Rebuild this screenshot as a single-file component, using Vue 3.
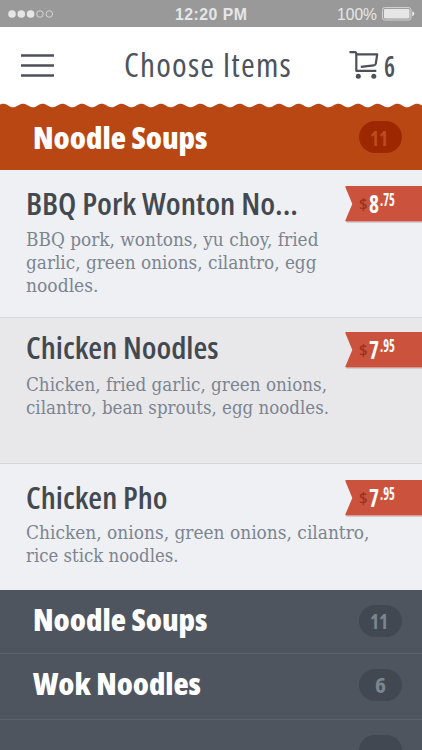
<script setup>
import { h } from 'vue'

// One line of text set to an exact measure, so wide faces can be condensed.
const FitText = (props) =>
  h('svg', { class: 'fit', width: props.w, height: props.h }, [
    h('text', { x: 0, y: props.b, textLength: props.w, lengthAdjust: 'spacingAndGlyphs' }, props.t),
  ])
FitText.props = ['t', 'w', 'h', 'b']

const dishes = [
  {
    name: 'BBQ Pork Wonton No...', w: 272, size: 'first', dollars: '8', cents: '.75',
    lines: [
      ['BBQ pork, wontons, yu choy, fried', 292.5],
      ['garlic, green onions, cilantro, egg', 290.5],
      ['noodles.', 72.5],
    ],
  },
  {
    name: 'Chicken Noodles', w: 192.5, size: 'second', dollars: '7', cents: '.95',
    lines: [
      ['Chicken, fried garlic, green onions,', 301],
      ['cilantro, bean sprouts, egg noodles.', 303],
    ],
  },
  {
    name: 'Chicken Pho', w: 141.5, size: 'third', dollars: '7', cents: '.95',
    lines: [
      ['Chicken, onions, green onions, cilantro,', 343.5],
      ['rice stick noodles.', 152.5],
    ],
  },
]

const period = 19.7
let wave = 'M0 0H422V5.3'
for (let x = 422; x >= 0; x -= 1) {
  const y = 5.5 - 1.8 * Math.cos(((x - 3.3) / period) * 2 * Math.PI)
  wave += `L${x} ${y.toFixed(2)}`
}
wave += 'Z'
</script>

<template>
  <main class="screen">
    <div class="status">
      <svg class="signal" width="46" height="10">
        <circle cx="4" cy="5" r="3.8" class="on" />
        <circle cx="13.3" cy="5" r="3.8" class="on" />
        <circle cx="22.6" cy="5" r="3.8" class="on" />
        <circle cx="32" cy="5" r="3.3" class="off" />
        <circle cx="41.3" cy="5" r="3.3" class="off" />
      </svg>
      <FitText class="clock" t="12:20 PM" :w="72.5" :h="20" :b="19.7" />
      <FitText class="percent" t="100%" :w="40" :h="20" :b="19.8" />
      <svg class="battery" width="33" height="14">
        <rect x=".6" y=".6" width="28.3" height="12.4" rx="2" class="case" />
        <rect x="2" y="2" width="25.5" height="9.6" rx="1" class="on" />
        <path d="M30.2 4.5Q32.4 5 32.4 6.8Q32.4 8.6 30.2 9.2Z" class="on" />
      </svg>
    </div>

    <header class="header">
      <svg class="menu" width="33" height="24">
        <path d="M0 1.5H33M0 11.5H33M0 21.5H33" />
      </svg>
      <FitText class="title" t="Choose Items" :w="168" :h="50" :b="38.3" />
      <svg class="cart" width="30" height="30" viewBox="0 0 30 30">
        <path d="M.5 2.2H5.6Q7.3 2.2 7.3 4V20.8H27.3M7.3 4.4H28.2L26.8 13.6Q26.5 15.2 24.8 15.4L11.8 16.8" />
        <circle cx="9.3" cy="26.2" r="2.5" />
        <circle cx="24.8" cy="26.2" r="2.5" />
      </svg>
      <FitText class="cart-count" t="6" :w="11" :h="50" :b="37.5" />
    </header>

    <section class="category active">
      <svg class="scallop" width="422" height="10"><path :d="wave" /></svg>
      <FitText class="cat-name" t="Noodle Soups" :w="174.5" :h="40" :b="30.5" />
      <span class="badge"><FitText t="11" :w="18" :h="31" :b="24.8" /></span>
    </section>

    <article v-for="d in dishes" :key="d.name" class="dish" :class="d.size">
      <FitText class="dish-name" :t="d.name" :w="d.w" :h="36" :b="30" />
      <div class="desc">
        <FitText v-for="l in d.lines" :key="l[0]" :t="l[0]" :w="l[1]" :h="23" :b="17" />
      </div>
      <div class="price">
        <svg class="ribbon" width="77" height="37">
          <path class="shade" d="M1.5 36.3H77" />
          <path class="body" d="M1.5 0H77V35.5H1.5Q-.2 35.5.5 34L7.3 18 .5 1.5Q-.2 0 1.5 0Z" />
        </svg>
        <div class="amount">
          <FitText class="currency" t="$" :w="8.5" :h="36" :b="24" />
          <FitText class="dollars" :t="d.dollars" :w="10" :h="36" :b="26.7" />
          <FitText class="cents" :t="d.cents" :w="14.8" :h="36" :b="20" />
        </div>
      </div>
    </article>

    <section class="category">
      <FitText class="cat-name" t="Noodle Soups" :w="174.5" :h="40" :b="30.5" />
      <span class="badge"><FitText t="11" :w="18" :h="31" :b="23.8" /></span>
    </section>
    <section class="category wok">
      <FitText class="cat-name" t="Wok Noodles" :w="168" :h="40" :b="30.3" />
      <span class="badge six"><FitText t="6" :w="11" :h="31" :b="24" /></span>
    </section>
    <section class="category last"><span class="badge"></span></section>
  </main>
</template>

<style>
body { margin: 0; overflow: hidden; }
</style>

<style scoped>
.screen {
  width: 422px;
  height: 750px;
  overflow: hidden;
  display: flex;
  flex-direction: column;
  background: #eff0f3;
  font-family: "Open Sans", "Noto Sans", sans-serif;
  font-stretch: 75%;
}
.screen > * { flex: none; box-sizing: border-box; }
svg { display: block; flex: none; }
.fit { overflow: visible; fill: currentColor; }

.status {
  height: 26.5px;
  background: #999;
  color: #e6e6e6;
  display: flex;
  align-items: flex-start;
  padding-left: 8px;
  font-family: "Liberation Sans", sans-serif;
  font-stretch: normal;
}
.signal { margin-top: 9px; }
.on { fill: #e6e6e6; }
.off { fill: none; stroke: #d5d5d5; stroke-width: 1; }
.clock { margin-left: 120.5px; font-size: 16.3px; font-weight: 700; letter-spacing: .5px; }
.percent { margin-left: 90px; font-size: 16px; }
.battery { margin: 7px 0 0 5px; }
.case { fill: none; stroke: #d5d5d5; stroke-width: 1; }

.header {
  height: 75.5px;
  background: #fff;
  color: #4e535d;
  display: flex;
  align-items: flex-start;
  padding: 12.5px 0 0 20.5px;
}
.menu { margin-top: 15px; fill: none; stroke: #4e4f5c; stroke-width: 2.6; }
.title { margin-left: 70.5px; font-size: 33px; font-weight: 400; letter-spacing: 1.2px; }
.cart { margin: 11px 0 0 56.5px; }
.cart path { fill: none; stroke: #4b5059; stroke-width: 2.2; stroke-linejoin: round; }
.cart circle { fill: #4b5059; }
.cart-count { margin-left: 5px; margin-top: -.5px; font-size: 28px; font-weight: 600; }

.category {
  position: relative;
  height: 64.5px;
  display: flex;
  align-items: flex-start;
  justify-content: space-between;
  background: #4f555f;
  border-bottom: 1px solid #5b626c;
  color: #fff;
  padding: 10.5px 20px 0 32.5px;
}
.cat-name { font-size: 30px; font-weight: 800; }
.active {
  height: 67.5px;
  background: #b94714;
  border-bottom: 0;
  padding-top: 16px;
}
.scallop { position: absolute; left: 0; top: -2px; fill: #fff; }
.badge {
  width: 43.5px;
  height: 31.5px;
  margin-top: 5px;
  border-radius: 16px;
  background: #424851;
  color: #7c8691;
  display: flex;
  justify-content: center;
  font-size: 21px;
  font-weight: 700;
}
.active .badge { margin-top: 3px; background: #9d2800; color: #bb4b20; }
.badge .fit { margin-right: 3px; }
.six .fit { margin-right: 0; }
.wok .badge { margin-top: 4.5px; }
.wok { height: 65.5px; }
.last { height: 40px; justify-content: flex-end; padding-top: 15px; }
.last .badge { margin-top: 0; }

.dish {
  position: relative;
  padding-left: 26px;
  background: #eff0f3;
  color: #434950;
}
.first { height: 148.5px; padding-top: 15px; border-bottom: 1px solid #d5d5da; }
.second { height: 145.5px; padding-top: 11px; background: #e8e8eb; border-bottom: 1px solid #d5d5da; }
.third { height: 126px; padding-top: 15.5px; }
.dish-name { font-size: 31px; font-weight: 600; }
.desc {
  margin-top: 8.5px;
  color: #7b8491;
  font-family: "DejaVu Serif", serif;
  font-size: 17.8px;
  font-stretch: normal;
}
.second .desc { margin-top: 9px; }
.third .desc { margin-top: 6.5px; }
.price { position: absolute; right: 0; top: 16.3px; width: 77px; height: 37px; }
.second .price { top: 13.7px; }
.third .price { top: 16.5px; }
.body { fill: #cb523c; }
.shade { stroke: #c9c5c8; stroke-width: 1; }
.amount { position: absolute; left: 13.5px; top: 0; display: flex; }
.currency { color: #963324; font-size: 16px; font-weight: 600; }
.dollars { margin-left: 2px; color: #fff; font-size: 25px; font-weight: 700; }
.cents { margin-left: .7px; color: #fff; font-size: 17px; font-weight: 700; }
</style>
